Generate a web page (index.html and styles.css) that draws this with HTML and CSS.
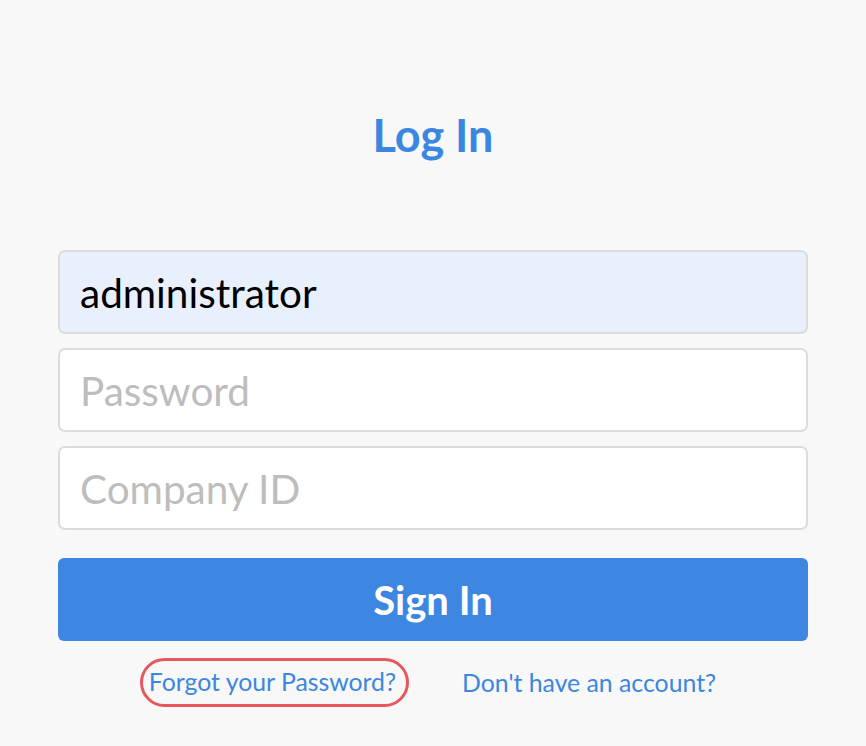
FILE: index.html
```html
<html>
<head>
	<title>Log In</title>
	<link rel="stylesheet" href="styles.css">
</head>
<body>
	<div id="login">
		<h1 class="title">Log In</h1>
		<form class="form">
			<input class="field filled" type="text" value="administrator">
			<input class="field" type="password" placeholder="Password">
			<input class="field" type="text" placeholder="Company ID">
			<button class="submit" type="button">Sign In</button>
		</form>
		<div class="links">
			<a href="javascript:;" class="link marked">Forgot your Password?</a>
			<a href="javascript:;" class="link">Don't have an account?</a>
		</div>
	</div>
</body>
</html>
```

FILE: styles.css
```css
body{
	margin: 0;
	background: #f8f8f8;
	font-family: Lato, "Noto Sans", sans-serif;
}

#login{
	width: 750px;
	margin: 0 auto;
	padding-top: 110px;
}

.title{
	margin: 0;
	height: 140px;
	font-size: 45px;
	line-height: 50px;
	font-weight: bold;
	text-align: center;
	color: #3b86e0;
}

.form{
	display: flex;
	flex-direction: column;
	gap: 14px;
	margin: 0;
}

.field{
	box-sizing: border-box;
	width: 750px;
	height: 84px;
	padding: 0 20px;
	border: 2px solid #dcdcdc;
	border-radius: 7px;
	background: #fff;
	font-family: Lato, sans-serif;
	font-size: 40.5px;
	color: #000;
	outline: none;
}

.field::placeholder{
	color: #bdbdbd;
}

.filled{
	background: #e8f0fe;
}

.submit{
	height: 83px;
	margin-top: 14px;
	border: none;
	border-radius: 6px;
	background: #3d86e2;
	color: #fff;
	font-family: Lato, sans-serif;
	font-size: 40px;
	font-weight: bold;
	cursor: pointer;
}

.links{
	display: flex;
	justify-content: center;
	align-items: center;
	gap: 53px;
	margin-top: 17px;
	padding-right: 10px;
}

.link{
	font-size: 24.8px;
	line-height: 30px;
	color: #3b86e0;
	text-decoration: none;
}

.marked{
	padding: 6px 10px 7px 6px;
	border: 3px solid #e8575e;
	border-radius: 26px;
}
```
